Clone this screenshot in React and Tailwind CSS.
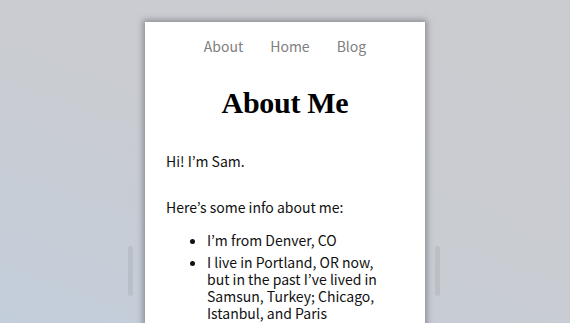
export default function App() {
  return (
    <div className="relative w-[570px] h-[323px] overflow-hidden bg-[linear-gradient(20deg,#c3cedb_0%,#c9ccd2_45%,#cbccd0_100%)]">
      <div className="absolute left-[128px] top-[246px] w-[5px] h-[50px] rounded-full bg-[#b9bfc7]" />
      <div className="absolute left-[435px] top-[246px] w-[5px] h-[50px] rounded-full bg-[#bcbfc4]" />
      <div className="flex justify-center pt-[22px]">
        <div className="w-[280px] h-[320px] bg-white shadow-[0_0_6px_2px_rgba(90,90,95,0.55)] font-['Noto_Sans_CJK_KR','Open_Sans',sans-serif]">
          <nav className="flex justify-center gap-[27px] pt-[13px] text-[14px] leading-[22px] text-[#808080]">
            <span>About</span>
            <span>Home</span>
            <span>Blog</span>
          </nav>
          <h1 className="mt-[26px] text-center text-[30px] leading-[40px] font-bold text-black font-['Liberation_Serif',serif] tracking-[-0.3px]">
            About Me
          </h1>
          <div className="px-[21px] text-[14px] text-[#111] leading-[17px]">
            <p className="mt-[30px]">Hi! I’m Sam.</p>
            <p className="mt-[29px]">Here’s some info about me:</p>
            <ul className="mt-[16px] pl-[41px] pr-[18px] list-disc">
              <li>I’m from Denver, CO</li>
              <li className="mt-[5px]">I live in Portland, OR now, but in the past I’ve lived in Samsun, Turkey; Chicago, Istanbul, and Paris</li>
            </ul>
          </div>
        </div>
      </div>
    </div>
  );
}
